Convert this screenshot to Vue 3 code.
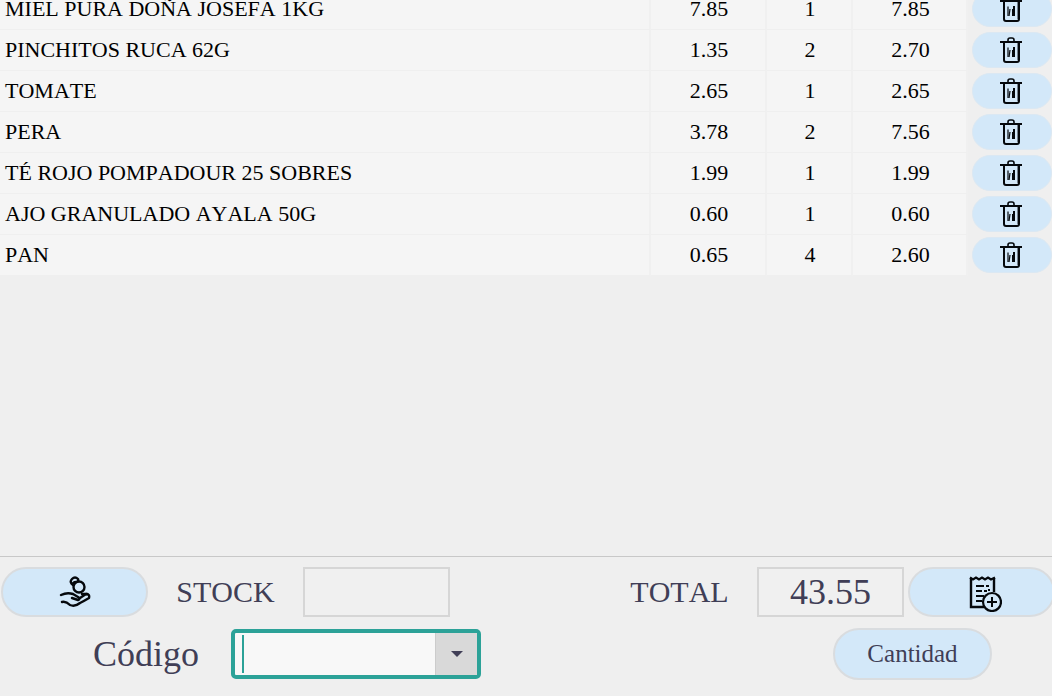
<script setup>
import { ref, computed } from 'vue'

const items = ref([
  { id: 1, name: 'MIEL PURA DOÑA JOSEFA 1KG', price: 7.85, units: 1 },
  { id: 2, name: 'PINCHITOS RUCA 62G', price: 1.35, units: 2 },
  { id: 3, name: 'TOMATE', price: 2.65, units: 1 },
  { id: 4, name: 'PERA', price: 3.78, units: 2 },
  { id: 5, name: 'TÉ ROJO POMPADOUR 25 SOBRES', price: 1.99, units: 1 },
  { id: 6, name: 'AJO GRANULADO AYALA 50G', price: 0.6, units: 1 },
  { id: 7, name: 'PAN', price: 0.65, units: 4 }
])
const previous = 17.6
const stock = ref('')
const code = ref('')
const total = computed(() =>
  (previous + items.value.reduce((sum, i) => sum + i.price * i.units, 0)).toFixed(2)
)
function remove(id) {
  items.value = items.value.filter((i) => i.id !== id)
}
</script>

<template>
  <div class="till">
    <main class="list">
      <table class="items">
        <colgroup>
          <col>
          <col class="c-price">
          <col class="c-units">
          <col class="c-sum">
          <col class="c-action">
        </colgroup>
        <tbody>
          <tr v-for="item in items" :key="item.id">
            <td class="name">{{ item.name }}</td>
            <td>{{ item.price.toFixed(2) }}</td>
            <td>{{ item.units }}</td>
            <td>{{ (item.price * item.units).toFixed(2) }}</td>
            <td class="action">
              <button class="pill remove" type="button" :aria-label="'Eliminar ' + item.name" @click="remove(item.id)">
                <svg width="24" height="26" viewBox="0 0 24 26" fill="none" stroke="#05080c">
                  <path d="M17 6h2v17h-2z" fill="#75818e" stroke="none" />
                  <path d="M0 5h22" stroke-width="2" />
                  <path d="M8 4V3Q8 1 10 1H12Q14 1 14 3V4" stroke-width="1.600" />
                  <path d="M4 6v17Q4 25 6 25H17Q19 25 19 23V6" stroke-width="2" />
                  <path d="M8 10.500v9.500" stroke-width="1.200" />
                  <path d="M10 13l-1 7" stroke-width="1.200" />
                  <path d="M14 10v10" stroke-width="2" />
                  <path d="M12.500 13v7" stroke-width="1" />
                </svg>
              </button>
            </td>
          </tr>
        </tbody>
      </table>
    </main>

    <footer class="bar">
      <div class="row">
        <button class="pill wide" type="button" aria-label="Cobrar">
          <svg width="32" height="32" viewBox="0 0 32 32" fill="none" stroke="#05080c" stroke-width="2.400" stroke-linecap="round" stroke-linejoin="round">
            <path d="M14 9Q10 6 13 3Q16 0 19 3Q20 6 17 6T14 9" />
            <ellipse cx="20" cy="11" rx="5.500" ry="5.500" />
            <path d="M2 19Q8 16 14 18L19 21Q22 23 19 24L13 22M21 22L27 18Q31 18 30 22Q25 25 21 27Q16 31 11 29Q7 25 3 26" />
            <path d="M23 18h5" />
          </svg>
        </button>
        <label class="caption" for="stock">STOCK</label>
        <input id="stock" v-model="stock" class="box" type="text">
        <span class="space"></span>
        <label class="caption" for="total">TOTAL</label>
        <input id="total" class="box" type="text" :value="total" readonly>
        <button class="pill wide ticket" type="button" aria-label="Nuevo ticket">
          <svg width="34" height="36" viewBox="0 0 34 36" fill="none" stroke="#05080c">
            <path d="M3 2v29h13M26 2v14" stroke-width="2.400" />
            <path d="M2 1.500l3 2 3-2 3 2 3-2 3 2 3-2 3 2 4-2" stroke-width="2.200" />
            <path d="M8 10h8M8 15h6M8 20h8M8 25h6" stroke-width="2.200" />
            <path d="M18 10h3M16 15h3M20 14h2M17 20h3" stroke-width="2" />
            <circle cx="24" cy="26" r="9" fill="#d3e8f9" stroke-width="2.200" />
            <path d="M19 26h10M24 21v10" stroke-width="2" />
          </svg>
        </button>
      </div>
      <div class="row second">
        <label class="code-label" for="code">Código</label>
        <div class="combo">
          <span class="caret"></span>
          <input id="code" v-model="code" type="text" role="combobox" aria-expanded="false">
          <button type="button" aria-label="Mostrar lista">
            <svg width="12" height="8" viewBox="0 0 12 8"><path d="M0 1h12L6 7z" fill="#403e56" /></svg>
          </button>
        </div>
        <span class="space"></span>
        <button class="pill quantity" type="button">Cantidad</button>
      </div>
    </footer>
  </div>
</template>

<style>
body {
  background: #efefef;
}
</style>

<style scoped>
.till {
  display: flex;
  flex-direction: column;
  height: 100vh;
  overflow: hidden;
  background: #efefef;
  color: #403e56;
  font-family: "Liberation Serif", "Times New Roman", serif;
  font-kerning: none;
}
.till * {
  box-sizing: border-box;
}
.list {
  flex: 1;
  min-height: 0;
  overflow: hidden;
}
.items {
  width: 100%;
  margin-top: -11px;
  table-layout: fixed;
  border-collapse: separate;
  border-spacing: 0;
  color: #000;
  font-size: 22px;
  line-height: 40px;
}
.c-price {
  width: 116px;
}
.c-units {
  width: 86px;
}
.c-sum {
  width: 115px;
}
.c-action {
  width: 84px;
}
td {
  height: 41px;
  padding: 0 0 0 2px;
  background: #f5f5f5;
  border-right: 2px solid #f0f0f0;
  border-bottom: 1px solid #efefef;
  text-align: center;
}
td.name {
  padding-left: 5px;
  text-align: left;
  white-space: nowrap;
}
td.action {
  padding-left: 4px;
  border-right: 0;
  background: #efefef;
}
button {
  display: flex;
  align-items: center;
  justify-content: center;
  flex: none;
  padding: 0;
  border: 0;
  color: inherit;
  font: inherit;
}
svg {
  flex: none;
  display: block;
}
.pill {
  background: #d3e8f9;
  border: 2px solid #d9dcdf;
  border-radius: 26px;
}
.remove {
  width: 100%;
  height: 36px;
  border: 1px solid #dbe8f3;
}
.bar {
  flex: none;
  padding: 10px 0 16px 1px;
  border-top: 1px solid #c8c8c8;
}
.row {
  display: flex;
  align-items: center;
}
.second {
  margin-top: 11px;
}
.wide {
  width: 147px;
  height: 50px;
}
.ticket {
  margin: 0 -3px 0 4px;
  padding: 4px 0 0 6px;
}
.caption {
  width: 155px;
  text-align: center;
  font-size: 30px;
  line-height: 48px;
}
.box {
  width: 147px;
  height: 50px;
  padding: 0;
  border: 2px solid #d6d6d6;
  border-radius: 0;
  background: #f0f0f0;
  color: inherit;
  font: inherit;
  font-size: 36px;
  text-align: center;
}
.space {
  flex: 1;
}
.code-label {
  width: 230px;
  padding-right: 32px;
  text-align: right;
  font-size: 36px;
  line-height: 52px;
}
.combo {
  display: flex;
  align-items: center;
  width: 250px;
  height: 50px;
  border: 4px solid #2ca298;
  border-radius: 5px;
  background: #f8f8f8;
}
.combo .caret {
  width: 2px;
  height: 38px;
  margin-left: 7px;
  background: #2ca298;
}
.combo input {
  flex: 1;
  min-width: 0;
  height: 100%;
  padding: 0 4px;
  border: 0;
  outline: 0;
  background: transparent;
  color: inherit;
  font: inherit;
  font-size: 30px;
}
.combo button {
  width: 42px;
  height: 100%;
  border-left: 1px solid #cccccc;
  background: #d9d9d9;
}
.quantity {
  width: 159px;
  height: 52px;
  margin-right: 60px;
  font-size: 25px;
}
</style>
